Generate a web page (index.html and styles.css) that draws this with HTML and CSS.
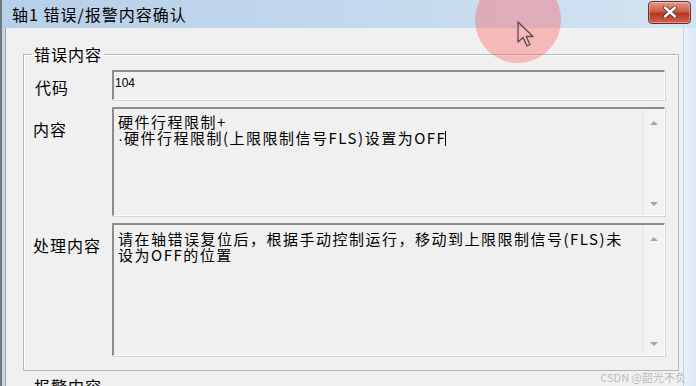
FILE: index.html
```html
<!DOCTYPE html>
<html lang="zh-CN">
<head>
    <meta charset="UTF-8">
    <meta name="viewport" content="width=device-width, initial-scale=1.0">
    <title>轴1 错误/报警内容确认</title>
    <link rel="stylesheet" href="styles.css">
</head>
<body>
    <div class="window">
        <div class="titlebar">
            <span class="title">轴1 错误/报警内容确认</span>
            <button class="close" title="关闭">
                <svg width="18" height="12" viewBox="0 0 18 12">
                    <path d="M4 1.5 L14 10.5 M14 1.5 L4 10.5" stroke="#5a2a22" stroke-width="4" stroke-linecap="round"/>
                    <path d="M4 1.5 L14 10.5 M14 1.5 L4 10.5" stroke="#fff" stroke-width="2.4" stroke-linecap="round"/>
                </svg>
            </button>
        </div>
        <div class="frame">
            <div class="edge-left"></div>
            <div class="client">
                <fieldset class="group">
                    <legend>错误内容</legend>
                    <div class="rows">
                        <label class="label label-code">代码</label>
                        <div class="field field-code">104</div>

                        <label class="label">内容</label>
                        <div class="field field-content">
                            <div class="text">硬件行程限制+<br><span class="dot">·</span>硬件行程限制(上限限制信号FLS)设置为OFF<span class="caret"></span></div>
                            <div class="scrollbar"><span class="arrow up"></span><span class="arrow down"></span></div>
                        </div>

                        <label class="label">处理内容</label>
                        <div class="field field-handle">
                            <div class="text">请在轴错误复位后，根据手动控制运行，移动到上限限制信号(FLS)未<br>设为OFF的位置</div>
                            <div class="scrollbar"><span class="arrow up"></span><span class="arrow down"></span></div>
                        </div>
                    </div>
                </fieldset>
                <fieldset class="group">
                    <legend>报警内容</legend>
                </fieldset>
            </div>
            <div class="edge-right"></div>
        </div>

        <!-- recorded mouse highlight -->
        <div class="click-spot"></div>
        <svg class="cursor" width="20" height="28" viewBox="0 0 20 28">
            <path d="M1 1 L1 21 L6 16.5 L10 25 L13 23.5 L9.2 15.5 L16 15.5 Z" fill="none" stroke="#5a4a4e" stroke-width="1.3" stroke-linejoin="round"/>
        </svg>
        <div class="watermark">CSDN @韶光不负</div>
    </div>
</body>
</html>
```

FILE: styles.css
```css
* {
    box-sizing: border-box;
}
body {
    margin: 0;
    font-family: "Noto Sans CJK SC", "Noto Sans", sans-serif;
    color: #000;
    background: #dbe7f3;
}
.window {
    position: relative;
    width: 696px;
    height: 386px;
    overflow: hidden;
    display: flex;
    flex-direction: column;
}
.titlebar {
    height: 28px;
    flex: none;
    display: flex;
    align-items: center;
    padding-left: 12px;
    background: linear-gradient(to right, #b7cfe8, #c6daee 60%, #d3e3f3);
    border-left: 2px solid #6e7680;
}
.title {
    font-size: 16px;
    letter-spacing: 1px;
    line-height: 18px;
    margin-left: -2px;
    margin-top: -1px;
}
.close {
    margin-left: auto;
    margin-right: 5px;
    margin-top: -4px;
    width: 43px;
    height: 23px;
    padding: 0;
    display: flex;
    align-items: center;
    justify-content: center;
    border: 1px solid #6b3027;
    border-radius: 4px;
    background: linear-gradient(to bottom, #e39a8c, #cc5a47 45%, #b8321f 55%, #d2644f);
    box-shadow: inset 0 0 0 1px rgba(255, 255, 255, 0.35);
}
.frame {
    flex: 1;
    display: flex;
}
.edge-left {
    width: 6px;
    background: #c9d5e2;
    border-left: 2px solid #6e7680;
    border-right: 1px solid #9aa4ae;
}
.edge-right {
    width: 13px;
    background: linear-gradient(to right, #e9f0f7, #dbe7f3);
    border-left: 1px solid #c7d2de;
}
.client {
    flex: 1;
    background: #f0f0f0;
    padding: 17px 4px 0 17px;
}
.group {
    margin: 0;
    padding: 7px 13px 14px 0;
    border: 1px solid #b5b5b5;
    box-shadow: inset 1px 1px 0 #fff;
}
.group + .group {
    margin-top: 6px;
    height: 60px;
}
.group legend {
    margin-left: 8px;
    padding: 0 2px;
    font-size: 16px;
    letter-spacing: 1px;
    line-height: 18px;
}
.rows {
    display: grid;
    grid-template-columns: 88px 1fr;
    grid-template-rows: 30px 109px 133px;
    row-gap: 7px;
}
.label {
    padding: 13px 0 0 9px;
    font-size: 16px;
    letter-spacing: 1px;
    line-height: 18px;
}
.label-code {
    padding-top: 8px;
    padding-left: 11px;
}
.field {
    display: flex;
    background: #f0f0f0;
    border-top: 2px solid #8c8c8c;
    border-left: 2px solid #8c8c8c;
    border-right: 1px solid #fff;
    border-bottom: 1px solid #fff;
    box-shadow: 1px 1px 0 #d6d6d6;
}
.field-code {
    padding: 4px 0 0 1px;
    font-family: "Liberation Sans", Arial, sans-serif;
    font-size: 12px;
    line-height: 14px;
}
.text {
    flex: 1;
    padding: 5px 0 0 4px;
    font-size: 15px;
    letter-spacing: 1.5px;
    line-height: 16px;
    white-space: nowrap;
}
.dot {
    font-family: "Liberation Sans", Arial, sans-serif;
    letter-spacing: 0;
    margin-right: 1px;
}
.field-handle .text {
    padding-top: 6px;
}
.caret {
    display: inline-block;
    width: 1px;
    height: 15px;
    margin-left: -1px;
    vertical-align: -2px;
    background: #000;
}
.scrollbar {
    width: 21px;
    display: flex;
    flex-direction: column;
    justify-content: space-between;
    align-items: center;
    padding: 12px 0 9px;
    background: #f3f3f3;
    border-left: 1px solid #e4e4e4;
}
.arrow {
    width: 0;
    height: 0;
    border-left: 4px solid transparent;
    border-right: 4px solid transparent;
}
.arrow.up {
    border-bottom: 4px solid #a6a6a6;
}
.arrow.down {
    border-top: 4px solid #a6a6a6;
}
.click-spot {
    position: absolute;
    left: 475px;
    top: -23px;
    width: 86px;
    height: 86px;
    border-radius: 50%;
    background: rgba(255, 95, 95, 0.38);
}
.cursor {
    position: absolute;
    left: 517px;
    top: 21px;
}
.watermark {
    position: absolute;
    right: 10px;
    bottom: 3px;
    font-size: 11px;
    line-height: 12px;
    color: #b8b8b8;
    text-shadow: 0 0 1px #fff;
}
```
